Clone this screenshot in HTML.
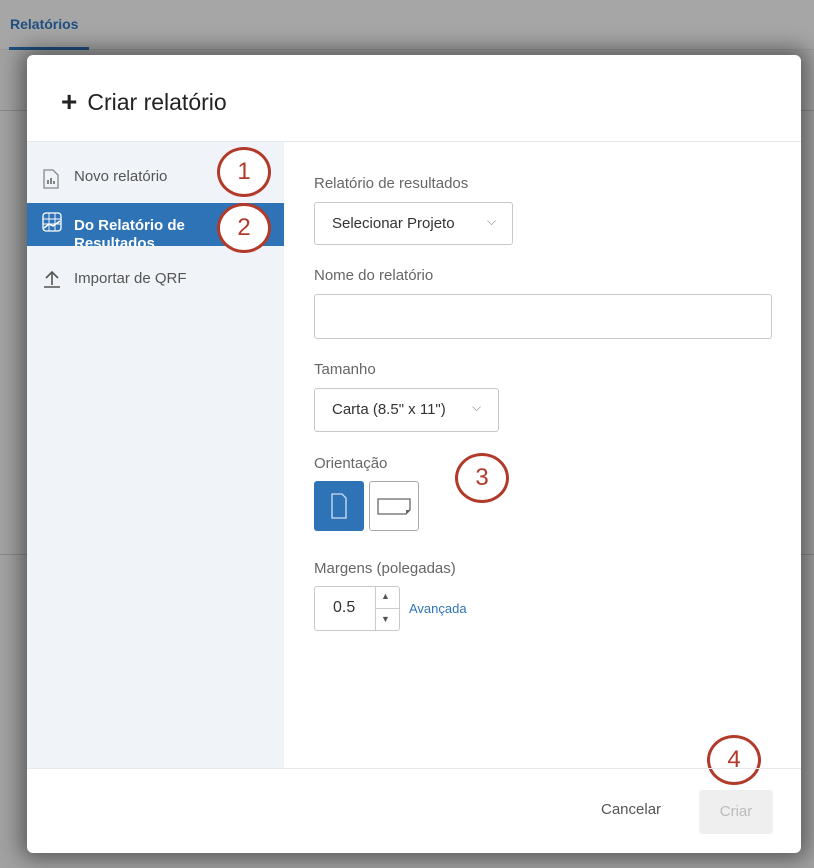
<!DOCTYPE html>
<html><head><meta charset="utf-8"><style>
*{box-sizing:border-box;margin:0;padding:0}
body{width:814px;height:868px;overflow:hidden;background:#a2a2a2;font-family:"Liberation Sans",sans-serif;position:relative}
.top{position:absolute;left:0;top:0;width:814px;height:50px;background:#a6a6a6;border-bottom:1px solid #999}
.tab{position:absolute;left:10px;top:16px;font-size:14px;font-weight:bold;color:#1f4f80}
.tabline{position:absolute;left:9px;top:47px;width:80px;height:3px;background:#1f4f80}
.hl{position:absolute;left:0;width:814px;height:1px;background:#8a8a8a}
.modal{position:absolute;left:27px;top:55px;width:774px;height:798px;background:#fff;border-radius:6px;box-shadow:0 0 22px 6px rgba(0,0,0,.45);overflow:hidden}
.hdr{height:87px;border-bottom:1px solid #e6e8eb;position:relative}
.hdr h1{position:absolute;left:34px;top:30px;font-size:23px;font-weight:normal;color:#222}
.hdr h1 b{font-size:28px;margin-right:10px;position:relative;top:1px}
.side{position:absolute;left:0;top:87px;width:257px;height:626px;background:#f0f3f7}
.item{position:absolute;left:0;width:257px;height:40px;font-size:15px;color:#555}
.item span{position:absolute;left:47px;top:11px}
.sel{background:#2f73b7;color:#fff;font-weight:bold;overflow:hidden;height:43px}
.sel span{top:14px;line-height:18px}
.circ{position:absolute;width:54px;height:50px;border:3px solid #b23a2a;border-radius:50%;color:#b23a2a;font-size:24px;text-align:center;line-height:44px;background:#fff}
.lbl{position:absolute;left:287px;font-size:15px;color:#666}
.box{position:absolute;border:1px solid #c8c8c8;border-radius:3px;background:#fff;font-size:15px;color:#333}
.foot{position:absolute;left:0;top:713px;width:774px;height:1px;background:#e6e8eb}
</style></head><body>
<div class="top"><div class="tab">Relatórios</div><div class="tabline"></div></div>
<div class="hl" style="top:110px"></div>
<div class="hl" style="top:554px"></div>
<div class="modal">
 <div class="hdr"><h1><b>+</b>Criar relatório</h1></div>
 <div class="side">
  <div class="item" style="top:15px">
   <svg style="position:absolute;left:15px;top:12px" width="18" height="20" viewBox="0 0 18 20"><path d="M2 1h9l5 5v13H2z" fill="none" stroke="#888" stroke-width="1.3"/><path d="M6 15v-4M9 15v-6M12 15v-3" stroke="#666" stroke-width="1.6"/></svg>
   <span>Novo relatório</span></div>
  <div class="item sel" style="top:61px">
   <svg style="position:absolute;left:15px;top:9px" width="20" height="20" viewBox="0 0 20 20"><rect x="1" y="1" width="18" height="18" rx="3" fill="none" stroke="#fff" stroke-width="1.3"/><path d="M1 7h18M1 12h18M7 1v18M13 1v18" stroke="#fff" stroke-width=".9"/><path d="M2 16l5-4 4 2 7-5" fill="none" stroke="#fff" stroke-width="1.5"/></svg>
   <span>Do Relatório de<br>Resultados</span></div>
  <div class="item" style="top:117px">
   <svg style="position:absolute;left:15px;top:10px" width="20" height="20" viewBox="0 0 20 20"><path d="M10 16V3M4 9l6-6 6 6M2 18h16" fill="none" stroke="#555" stroke-width="1.6"/></svg>
   <span>Importar de QRF</span></div>
 </div>
 <div class="circ" style="left:190px;top:92px">1</div>
 <div class="circ" style="left:190px;top:148px">2</div>
 <div class="circ" style="left:428px;top:398px">3</div>
 <div class="circ" style="left:680px;top:680px">4</div>

 <div class="lbl" style="top:120px">Relatório de resultados</div>
 <div class="box" style="left:287px;top:147px;width:199px;height:43px"><span style="position:absolute;left:17px;top:12px">Selecionar Projeto</span><span style="position:absolute;left:172px;top:11px;color:#888;font-size:12px">⌵</span></div>
 <div class="lbl" style="top:212px">Nome do relatório</div>
 <div class="box" style="left:287px;top:239px;width:458px;height:45px"></div>
 <div class="lbl" style="top:306px">Tamanho</div>
 <div class="box" style="left:287px;top:333px;width:185px;height:44px"><span style="position:absolute;left:17px;top:12px">Carta (8.5" x 11")</span><span style="position:absolute;left:157px;top:11px;color:#888;font-size:12px">⌵</span></div>
 <div class="lbl" style="top:400px">Orientação</div>
 <div style="position:absolute;left:287px;top:426px;width:50px;height:50px;background:#2f73b7;border-radius:3px">
  <svg width="50" height="50" viewBox="0 0 50 50"><path d="M18 13h10l4 4v20H18z" fill="none" stroke="#cfe0f2" stroke-width="1.3"/></svg></div>
 <div style="position:absolute;left:342px;top:426px;width:50px;height:50px;border:1px solid #aaa;border-radius:3px;background:#fff">
  <svg width="48" height="48" viewBox="0 0 48 48"><path d="M8 17h32v11l-4 4H8z" fill="none" stroke="#666" stroke-width="1.3"/><path d="M36 32v-4h4z" fill="#666"/></svg></div>
 <div class="lbl" style="top:505px">Margens (polegadas)</div>
 <div class="box" style="left:287px;top:531px;width:86px;height:45px;border-radius:3px">
  <span style="position:absolute;left:18px;top:12px;font-size:16px">0.5</span>
  <div style="position:absolute;left:60px;top:0;width:1px;height:43px;background:#ccc"></div>
  <div style="position:absolute;left:60px;top:21px;width:24px;height:1px;background:#ccc"></div>
  <span style="position:absolute;left:66px;top:4px;font-size:9px;color:#555">▲</span>
  <span style="position:absolute;left:66px;top:27px;font-size:9px;color:#555">▼</span>
 </div>
 <div style="position:absolute;left:382px;top:546px;font-size:13px;color:#2f73b7">Avançada</div>

 <div class="foot"></div>
 <div style="position:absolute;left:574px;top:746px;font-size:15px;color:#555">Cancelar</div>
 <div style="position:absolute;left:672px;top:735px;width:74px;height:44px;background:#efefef;border-radius:3px;color:#bbb;font-size:15px;text-align:center;line-height:44px">Criar</div>
</div>
</body></html>
